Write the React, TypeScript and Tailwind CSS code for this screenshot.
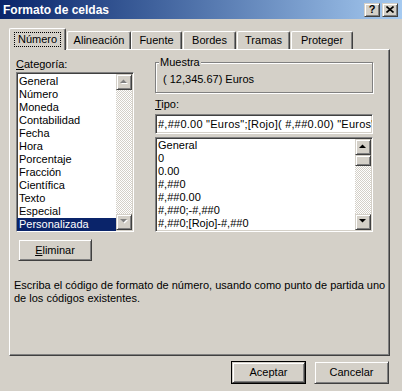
import React from 'react';

const raised =
  'border border-t-[#d4d0c8] border-l-[#d4d0c8] border-r-[#404040] border-b-[#404040] shadow-[inset_1px_1px_#ffffff,inset_-1px_-1px_#808080]';
const sunken =
  'border border-t-[#808080] border-l-[#808080] border-r-white border-b-white shadow-[inset_1px_1px_#404040,inset_-1px_-1px_#d4d0c8]';
const checker = 'bg-[repeating-conic-gradient(#ffffff_0_25%,#d4d0c8_0_50%)] bg-size-[2px_2px]';

const categorias = [
  'General',
  'Número',
  'Moneda',
  'Contabilidad',
  'Fecha',
  'Hora',
  'Porcentaje',
  'Fracción',
  'Científica',
  'Texto',
  'Especial',
  'Personalizada',
];

const tipos = ['General', '0', '0.00', '#,##0', '#,##0.00', '#,##0;-#,##0', '#,##0;[Rojo]-#,##0'];

function Arrow({ up, disabled }: { up?: boolean; disabled?: boolean }) {
  const pts = up ? '0,4 3.5,0.5 7,4' : '0,0 7,0 3.5,3.5';
  return (
    <div className={`w-[16px] h-[16px] shrink-0 flex items-center justify-center bg-[#d4d0c8] ${raised}`}>
      <svg width="8" height="6" viewBox="0 0 8 6">
        {disabled && <polygon points={pts} fill="#ffffff" transform="translate(1,1)" />}
        <polygon points={pts} fill={disabled ? '#808080' : '#000000'} />
      </svg>
    </div>
  );
}

function Tab({ label, w, active }: { label: string; w: string; active?: boolean }) {
  if (active) {
    return (
      <div
        className={`${w} h-[22px] -mb-px relative z-10 bg-[#d4d0c8] border-l border-t border-r border-l-white border-t-white border-r-[#404040] rounded-t-[2px] shadow-[inset_-1px_0_#808080] flex items-start justify-center pt-[4px]`}
      >
        <span className="outline-1 outline-dotted outline-black px-[3px] leading-[13px]">{label}</span>
      </div>
    );
  }
  return (
    <div
      className={`${w} h-[18px] bg-[#d4d0c8] border-l border-t border-r border-l-white border-t-white border-r-[#404040] rounded-t-[2px] shadow-[inset_-1px_0_#808080] flex items-start justify-center pt-[2px] leading-[13px]`}
    >
      {label}
    </div>
  );
}

function Button({ children, isDefault }: { children: React.ReactNode; isDefault?: boolean }) {
  const inner = (
    <div className={`w-full h-full flex items-center justify-center bg-[#d4d0c8] ${raised}`}>{children}</div>
  );
  if (isDefault) {
    return <div className="w-[75px] h-[23px] border border-black">{inner}</div>;
  }
  return <div className="w-[75px] h-[23px]">{inner}</div>;
}

export default function App() {
  return (
    <div className="w-[402px] h-[391px] bg-[#d4d0c8] overflow-hidden font-['Liberation_Sans',Arial,sans-serif] text-[11px] text-black">
      {/* title bar */}
      <div className="h-[19px] bg-linear-to-r from-[#0a246a] to-[#a6caf0] flex items-center pl-[3px] pr-[4px]">
        <span className="text-white font-bold text-[12px] leading-[14px]">Formato de celdas</span>
        <div className="ml-auto flex gap-[2px]">
          <div className={`w-[16px] h-[14px] flex items-center justify-center bg-[#d4d0c8] ${raised}`}>
            <span className="font-bold text-[11px] leading-[11px]">?</span>
          </div>
          <div className={`w-[16px] h-[14px] flex items-center justify-center bg-[#d4d0c8] ${raised}`}>
            <svg width="8" height="7" viewBox="0 0 8 7">
              <path d="M0.5 0.5 L7.5 6.5 M7.5 0.5 L0.5 6.5" stroke="#000" strokeWidth="1.6" />
            </svg>
          </div>
        </div>
      </div>

      {/* tabs */}
      <div className="mt-[9px] pl-[9px] flex items-end h-[21px]">
        <Tab label="Número" w="w-[57px]" active />
        <div className="ml-[1px]" />
        <Tab label="Alineación" w="w-[64px]" />
        <Tab label="Fuente" w="w-[51px]" />
        <div className="ml-[1px]" />
        <Tab label="Bordes" w="w-[53px]" />
        <div className="ml-[1px]" />
        <Tab label="Tramas" w="w-[53px]" />
        <div className="ml-[1px]" />
        <Tab label="Proteger" w="w-[62px]" />
      </div>

      {/* panel */}
      <div className="ml-[9px] w-[381px] h-[307px] border border-l-white border-t-white border-r-[#404040] border-b-[#404040] shadow-[inset_-1px_-1px_#808080]">
        <div className="flex items-start pl-[6px]">
          {/* left column */}
          <div className="w-[118px] pt-[8px]">
            <div className="leading-[13px]">
              <span className="underline">C</span>ategoría:
            </div>
            <div className={`mt-px h-[160px] bg-white flex ${sunken}`}>
              <div className="flex-1 pt-[2px]">
                {categorias.map((c) => (
                  <div
                    key={c}
                    className={`h-[13px] leading-[13px] pl-[2px] ${c === 'Personalizada' ? 'bg-[#0a246a] text-white' : ''}`}
                  >
                    {c}
                  </div>
                ))}
              </div>
              <div className={`w-[16px] flex flex-col mr-px my-px ${checker}`}>
                <Arrow up disabled />
                <div className="flex-1" />
                <Arrow disabled />
              </div>
            </div>
            <div className="mt-[7px] ml-[2px] w-[74px] h-[22px]">
              <div className={`w-full h-full flex items-center justify-center bg-[#d4d0c8] ${raised}`}>
                <span>
                  <span className="underline">E</span>liminar
                </span>
              </div>
            </div>
          </div>

          {/* right column */}
          <div className="w-[218px] ml-[21px] pt-[12px]">
            <div className="relative h-[31px] border border-[#808080] shadow-[inset_1px_1px_#ffffff,1px_1px_#ffffff]">
              <span className="absolute -top-[7px] left-[3px] px-[1px] bg-[#d4d0c8] leading-[13px]">Muestra</span>
              <div className="pt-[10px] pl-[7px] leading-[13px]">( 12,345.67) Euros</div>
            </div>
            <div className="mt-[5px] leading-[13px]">
              <span className="underline">T</span>ipo:
            </div>
            <div
              className={`mt-[3px] h-[20px] bg-white flex items-center pl-[2px] overflow-hidden whitespace-nowrap tracking-[0.25px] ${sunken}`}
            >
              #,##0.00 "Euros";[Rojo]( #,##0.00) "Euros"
            </div>
            <div className={`mt-[3px] h-[95px] bg-white flex ${sunken}`}>
              <div className="flex-1 pt-px">
                {tipos.map((t) => (
                  <div key={t} className="h-[13px] leading-[13px] pl-[2px] whitespace-nowrap">
                    {t}
                  </div>
                ))}
              </div>
              <div className={`w-[16px] flex flex-col mr-px my-px ${checker}`}>
                <Arrow up />
                <div className={`h-[11px] bg-[#d4d0c8] ${raised}`} />
                <div className="flex-1" />
                <Arrow />
              </div>
            </div>
          </div>
        </div>

        <div className="mt-[18px] pl-[4px] leading-[13px]">
          Escriba el código de formato de número, usando como punto de partida uno de los códigos existentes.
        </div>
      </div>

      {/* buttons */}
      <div className="mt-[5px] pr-[13px] flex justify-end gap-[8px]">
        <Button isDefault>Aceptar</Button>
        <Button>Cancelar</Button>
      </div>
    </div>
  );
}
